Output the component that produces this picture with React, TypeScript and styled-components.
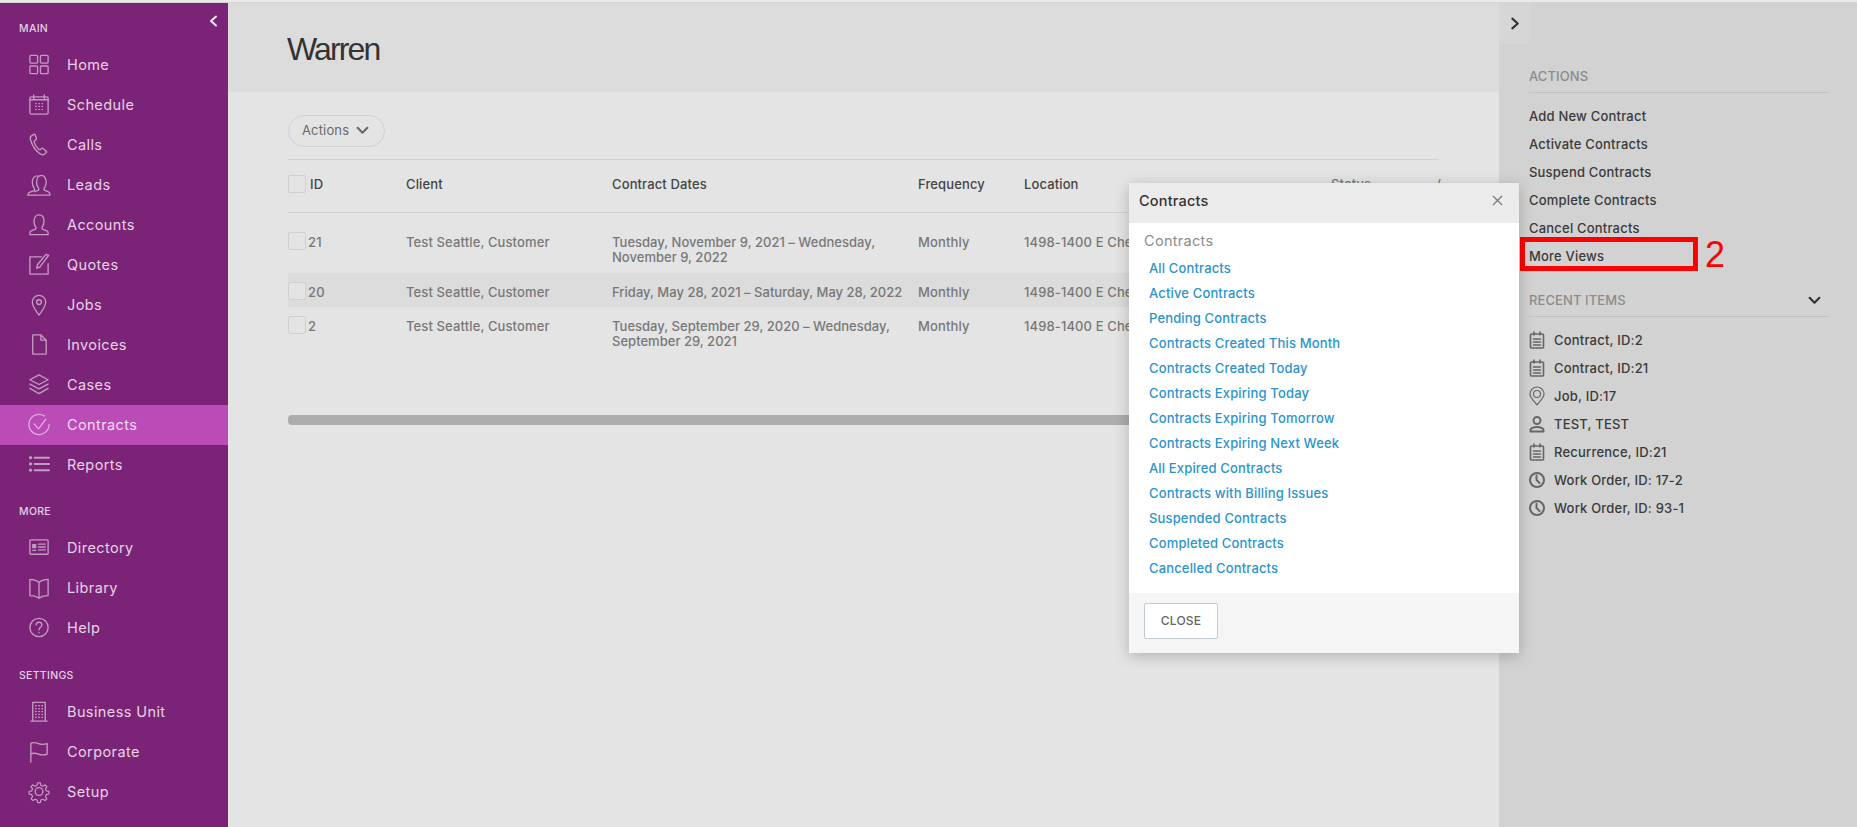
import React from "react";
import styled, { createGlobalStyle } from "styled-components";

const Global = createGlobalStyle`
  html, body { margin: 0; padding: 0; height: 100%; overflow: hidden; background: #e4e4e4; }
  body { font-family: Inter, "Noto Sans", "Liberation Sans", sans-serif; }
  * { box-sizing: border-box; }
`;

const Page = styled.div`
  position: relative;
  width: 1857px;
  height: 827px;
  display: flex;
  flex-direction: column;
  overflow: hidden;
`;
const TopStrip = styled.div`
  height: 3px;
  flex: none;
  background: #e9e9e9;
  border-bottom: 1px solid #d4d4d4;
`;
const Shell = styled.div`
  flex: 1;
  display: flex;
  min-height: 0;
`;

/* Sidebar */
const Sidebar = styled.nav`
  position: relative;
  width: 228px;
  flex: none;
  background: #7b2477;
  padding-top: 19px;
  color: #e6d3e5;
`;
const Collapse = styled.button`
  position: absolute;
  top: 11px;
  right: 8px;
  width: 12px;
  height: 14px;
  padding: 0;
  border: 0;
  background: none;
  color: #f2e8f1;
  display: flex;
`;
const NavLabel = styled.div<{ $top: number }>`
  height: 14px;
  line-height: 14px;
  margin: ${(p) => p.$top}px 0 9px 19px;
  font-size: 10.5px;
  font-weight: 500;
  letter-spacing: 0.3px;
  color: #e3cfe2;
`;
const NavRow = styled.a<{ $active?: boolean }>`
  height: 40px;
  display: flex;
  align-items: center;
  padding: 0 0 1px 27px;
  font-size: 14.5px;
  font-weight: 400;
  letter-spacing: 0.4px;
  color: ${(p) => (p.$active ? "#eeddee" : "#e6d3e5")};
  background: ${(p) => (p.$active ? "#bb4bb6" : "transparent")};
`;
const NavIcon = styled.svg<{ $active?: boolean }>`
  width: 24px;
  height: 24px;
  flex: none;
  margin-right: 16px;
  fill: none;
  stroke: ${(p) => (p.$active ? "#dfa9db" : "#c39bc2")};
  stroke-width: 1.4;
  stroke-linecap: round;
  stroke-linejoin: round;
`;

/* Main */
const Main = styled.main`
  flex: 1;
  min-width: 0;
  display: flex;
  flex-direction: column;
  background: #e4e4e4;
`;
const MainHeader = styled.header`
  height: 89px;
  flex: none;
  background: #dcdcdc;
  padding: 28px 60px 0 59px;
`;
const Title = styled.h1`
  margin: 0;
  font-family: "Liberation Sans", Arial, sans-serif;
  font-size: 32px;
  line-height: 36px;
  font-weight: 400;
  letter-spacing: -1.9px;
  color: #333;
`;
const MainBody = styled.div`
  flex: 1;
  padding: 23px 60px 0;
`;
const ActionsButton = styled.button`
  width: 97px;
  height: 32px;
  display: flex;
  align-items: center;
  padding: 0 0 2px 13px;
  gap: 7px;
  background: transparent;
  border: 1px solid #d0d0d0;
  border-radius: 16px;
  font-family: inherit;
  font-size: 13px;
  letter-spacing: 0.15px;
  color: #6a6a6a;
`;
const Table = styled.div`
  margin-top: 12px;
  border-top: 1px solid #d2d2d2;
`;
const Row = styled.div<{ $shade?: boolean }>`
  display: grid;
  grid-template-columns: 118px 206px 306px 106px 307px 105px 1fr;
  background: ${(p) => (p.$shade ? "#dcdcdc" : "transparent")};
  font-size: 13px;
  font-weight: 500;
  letter-spacing: 0.12px;
  line-height: 15px;
  color: #787878;
`;
const HeadRow = styled(Row)`
  height: 53px;
  align-items: center;
  padding-bottom: 4px;
  border-bottom: 1px solid #d2d2d2;
  margin-bottom: 12px;
  color: #454545;
`;
const BodyRow = styled(Row)<{ $h: number; $pad: number }>`
  height: ${(p) => p.$h}px;
  padding-top: ${(p) => p.$pad}px;
`;
const IdCell = styled.div`
  display: flex;
  gap: 2px;
`;
const HeadId = styled(IdCell)`
  gap: 4px;
  align-items: center;
`;
const Check = styled.span`
  width: 18px;
  height: 18px;
  border: 1px solid #cfcfcf;
  border-radius: 2px;
  background: #e4e4e4;
  flex: none;
  margin-top: -3px;
`;
const HeadCheck = styled(Check)`
  margin-top: 0;
`;
const DateCell = styled.div`
  letter-spacing: 0.02px;
`;
const LocationCell = styled.div`
  white-space: nowrap;
`;
const Scrollbar = styled.div`
  margin-top: 58px;
  height: 10px;
  width: 880px;
  border-radius: 4px;
  background: #adadad;
`;

/* Aside */
const Aside = styled.aside`
  position: relative;
  width: 358px;
  flex: none;
  background: #d2d2d2;
  padding: 65px 28px 0 30px;
`;
const AsideToggle = styled.button`
  position: absolute;
  left: 0;
  top: 0;
  width: 30px;
  height: 41px;
  padding: 0;
  border: 0;
  background: #d6d6d6;
  color: #333;
  display: flex;
  align-items: center;
  justify-content: center;
`;
const SectionHead = styled.div`
  height: 25px;
  display: flex;
  justify-content: space-between;
  align-items: flex-start;
  border-bottom: 1px solid #c2c2c2;
  font-size: 13px;
  line-height: 16px;
  font-weight: 500;
  letter-spacing: 0.1px;
  color: #8b8b8b;
`;
const SectionChevron = styled.span`
  display: flex;
  margin: 2px 8px 0 0;
  color: #333;
`;
const ActionList = styled.div`
  padding-top: 9px;
  margin-bottom: 22px;
`;
const ActionItem = styled.div`
  position: relative;
  height: 28px;
  line-height: 28px;
  font-size: 13px;
  font-weight: 500;
  letter-spacing: 0.2px;
  color: #3a3a3a;
  white-space: nowrap;
`;
const RedBox = styled.div`
  position: absolute;
  left: -9px;
  top: -5px;
  width: 178px;
  height: 34px;
  border: 5px solid #ff0000;
`;
const RedNumber = styled.div`
  position: absolute;
  left: 176px;
  top: -5px;
  font-family: "Liberation Sans", Arial, sans-serif;
  font-size: 36px;
  line-height: 36px;
  font-weight: 400;
  color: #ff0000;
`;
const RecentList = styled.div`
  padding-top: 9px;
`;
const RecentItem = styled(ActionItem)`
  display: flex;
  align-items: center;
  gap: 9px;
`;
const RecentIcon = styled.svg`
  width: 16px;
  height: 20px;
  flex: none;
  fill: none;
  stroke: #666;
  stroke-width: 1.6;
  stroke-linecap: round;
  stroke-linejoin: round;
`;

/* Modal */
const Modal = styled.div`
  position: absolute;
  left: 1129px;
  top: 183px;
  width: 390px;
  height: 470px;
  display: flex;
  flex-direction: column;
  background: #fff;
  box-shadow: 0 3px 14px rgba(0, 0, 0, 0.22);
`;
const ModalHead = styled.div`
  height: 40px;
  flex: none;
  display: flex;
  align-items: center;
  justify-content: space-between;
  padding: 0 16px 5px 10px;
  background: #ebebeb;
  font-size: 14.5px;
  font-weight: 500;
  letter-spacing: 0.2px;
  color: #333;
`;
const ModalBody = styled.div`
  flex: 1;
  padding: 9px 15px 0;
`;
const ModalSection = styled.div`
  height: 18px;
  line-height: 18px;
  font-size: 14.5px;
  letter-spacing: 0.3px;
  color: #8c8c8c;
  margin-bottom: 6px;
`;
const ModalLink = styled.a`
  display: block;
  height: 25px;
  line-height: 25px;
  padding-left: 5px;
  font-size: 13px;
  font-weight: 500;
  letter-spacing: 0.15px;
  color: #2a94cc;
`;
const ModalFoot = styled.div`
  height: 60px;
  flex: none;
  background: #f5f5f5;
  padding: 10px 15px;
`;
const CloseButton = styled.button`
  width: 74px;
  height: 36px;
  padding: 0 0 1px;
  background: #fff;
  border: 1px solid #c3cbd2;
  border-radius: 2px;
  font-family: inherit;
  font-size: 12px;
  font-weight: 500;
  letter-spacing: 0.2px;
  color: #666;
`;
const StatusTip = styled.span`
  color: #777;
`;

const icons: Record<string, React.ReactNode> = {
  Home: (
    <>
      <rect x="3" y="2.5" width="8" height="8" rx="1" />
      <rect x="14" y="2.5" width="8" height="8" rx="1" />
      <rect x="3" y="13.5" width="8" height="8" rx="1" />
      <rect x="14" y="13.5" width="8" height="8" rx="1" />
    </>
  ),
  Schedule: (
    <>
      <rect x="3" y="4" width="19" height="18" rx="1.5" />
      <path d="M7 2v4M18 2v4M3 7h19" />
      <path d="M9 11h.5M12.3 11h.5M15.6 11h.5M9 14h.5M12.3 14h.5M15.6 14h.5M9 17h.5M12.3 17h.5M15.6 17h.5" />
    </>
  ),
  Calls: (
    <path d="M7 1.5 4.6 3c-1.2.8-1.4 2.6-.9 4.3 1.6 5.3 4.7 10.5 9.3 14 1.6 1.2 3.6 1.8 5 .8l2-1.5c.6-.5.5-1.2 0-1.7l-3.3-2.8c-.5-.4-1.1-.4-1.6 0l-1.3 1c-.5.4-1.1.3-1.6-.1-2.4-2-4-4.8-4.8-7.7-.2-.6 0-1.1.5-1.4l1.4-.9c.5-.3.7-.9.5-1.5L8.600 2c-.3-.6-1-.9-1.6-.5z" />
  ),
  Leads: (
    <>
      <path d="M1 23c0-1.500.5-2.500 2-3l4-1.500c1-.5 1-1.500.5-2.500C6 14 5.500 12 5.500 9.500 5.500 5.500 8 3 11 3" />
      <path d="M9 23h15c0-2-.7-3-2-3.500l-3.500-1.300c-1-.5-1-1.700-.5-2.500 1.200-1.700 2-3.700 2-6C20 5.500 18 2.500 15 2.500S10 5.500 10 9.700c0 2.300.7 4.300 2 6 .5.800.5 2-.5 2.500L8 19.500" />
      <path d="M1 23h8" />
    </>
  ),
  Accounts: (
    <path d="M3 22.500v-1.800c0-1.200.6-2 1.800-2.400l3.600-1.300c1.100-.5 1.300-1.500.6-2.600C8 13 7.300 11 7.300 8.500c0-4 2-6.500 5.200-6.500s5.200 2.500 5.200 6.500c0 2.500-.7 4.500-1.700 5.900-.7 1.100-.5 2.100.6 2.600l3.600 1.300c1.200.4 1.800 1.200 1.800 2.400v1.800z" />
  ),
  Quotes: (
    <>
      <path d="M15 4H3v18h19V11" />
      <path d="M22.500 2.500 19.800 1.500 11 12l-1 4 3.500-1.500z" />
    </>
  ),
  Jobs: (
    <>
      <path d="M12.500 23c-3-4-7-8.500-7-13.500a7 7 0 0 1 14 0c0 5-4 9.500-7 13.500z" />
      <circle cx="12.500" cy="9.500" r="2.500" />
    </>
  ),
  Invoices: <path d="M6 2h8.500L20 7.500V22H6zM14.500 2v5.500H20" />,
  Cases: (
    <>
      <path d="M12.500 2 22 7l-9.500 5L3 7z" />
      <path d="M3 11.500l9.500 5 9.500-5" />
      <path d="M3 16l9.500 5.500L22 16" />
    </>
  ),
  Contracts: (
    <>
      <path d="M23 12a10.500 10.500 0 1 1-5-9" />
      <path d="M7.500 11.500l4.500 5 7.500-10" />
    </>
  ),
  Reports: (
    <>
      <path d="M8 5h15M8 11.500h15M8 18h15" strokeWidth="2" />
      <path d="M3.500 5h.5M3.500 11.500h.5M3.500 18h.5" strokeWidth="3" />
    </>
  ),
  Directory: (
    <>
      <rect x="3" y="4" width="19" height="15" rx="1" />
      <path d="M6 9h3v3H6z" fill="#c39bc2" />
      <path d="M12 8.500h7M12 11.500h7M12 14.500h7M6 15h3" />
    </>
  ),
  Library: (
    <path d="M12.500 6.500C10 4.500 7 3.500 3 3.500v17c4 0 7 1 9.500 2.500 2.500-1.500 5.500-2.500 9.500-2.500v-17c-4 0-7 1-9.500 3zM12.500 6.500V23" />
  ),
  Help: (
    <>
      <circle cx="12.500" cy="12" r="9.500" />
      <path d="M9.500 9.500c0-2 1.300-3 3-3s3 1.100 3 2.800c0 2.500-3 2.500-3 5" />
      <path d="M12.500 17.200v.3" />
    </>
  ),
  "Business Unit": (
    <>
      <path d="M6 21.500V2.500h13v19M4 22h17" />
      <path d="M9 6h.5M12.300 6h.5M15.600 6h.5M9 9h.5M12.300 9h.5M15.600 9h.5M9 12h.5M12.300 12h.5M15.600 12h.5M9 15h.5M12.300 15h.5M15.600 15h.5M9 18h.5M12.300 18h.5M15.600 18h.5" />
    </>
  ),
  Corporate: (
    <path d="M4 23V3.500c3-1.500 5-1 8 .2 3 1.200 5.500 1.200 9 0v11c-3.500 1.200-6 1.200-9 0-3-1.200-5-1.500-8-.2" />
  ),
  Setup: (
    <>
      <circle cx="12.500" cy="12" r="4" />
      <path d="M11 2h3l.7 3 2.200.9 2.600-1.600 2.100 2.100-1.600 2.600.9 2.200 3 .7v3l-3 .7-.9 2.200 1.600 2.600-2.100 2.100-2.600-1.600-2.200.9-.7 3h-3l-.7-3-2.200-.9-2.600 1.600-2.100-2.100 1.600-2.600-.9-2.200-3-.7v-3l3-.7.9-2.200L3.200 6.400l2.100-2.100 2.600 1.600 2.200-.9z" transform="translate(1.250 1.200) scale(.9)" />
    </>
  ),
};

const mainNav = ["Home", "Schedule", "Calls", "Leads", "Accounts", "Quotes", "Jobs", "Invoices", "Cases", "Contracts", "Reports"];
const moreNav = ["Directory", "Library", "Help"];
const settingsNav = ["Business Unit", "Corporate", "Setup"];

const rows = [
  { id: "21", date: "Tuesday, November 9, 2021 – Wednesday, November 9, 2022", h: 48, pad: 10 },
  { id: "20", date: "Friday, May 28, 2021 – Saturday, May 28, 2022", h: 34, pad: 12, shade: true },
  { id: "2", date: "Tuesday, September 29, 2020 – Wednesday, September 29, 2021", h: 50, pad: 12 },
];

const actions = ["Add New Contract", "Activate Contracts", "Suspend Contracts", "Complete Contracts", "Cancel Contracts"];

const links = [
  "All Contracts",
  "Active Contracts",
  "Pending Contracts",
  "Contracts Created This Month",
  "Contracts Created Today",
  "Contracts Expiring Today",
  "Contracts Expiring Tomorrow",
  "Contracts Expiring Next Week",
  "All Expired Contracts",
  "Contracts with Billing Issues",
  "Suspended Contracts",
  "Completed Contracts",
  "Cancelled Contracts",
];

const recentIcons: Record<string, React.ReactNode> = {
  clip: (
    <>
      <rect x="1.500" y="4" width="13" height="14" rx="1" />
      <path d="M5 2v3M11 2v3M4.500 9h7M4.500 12h7M4.500 15h7" />
    </>
  ),
  pin: (
    <>
      <path d="M8 19C5.500 15.500 1 12 1 8a7 7 0 0 1 14 0c0 4-4.500 7.500-7 11z" strokeWidth="1.200" />
      <circle cx="8" cy="8" r="3.500" strokeWidth="1.200" />
    </>
  ),
  user: (
    <>
      <circle cx="8" cy="6.500" r="3.500" strokeWidth="2" />
      <path d="M1.500 17.500v-1.500c0-1.500 3-3 6.500-3s6.500 1.500 6.500 3v1.500z" strokeWidth="2" />
    </>
  ),
  clock: (
    <>
      <circle cx="8" cy="10" r="7" strokeWidth="2" />
      <path d="M7.500 5.500V10l3 3" strokeWidth="2" />
    </>
  ),
};

const recents = [
  ["clip", "Contract, ID:2"],
  ["clip", "Contract, ID:21"],
  ["pin", "Job, ID:17"],
  ["user", "TEST, TEST"],
  ["clip", "Recurrence, ID:21"],
  ["clock", "Work Order, ID: 17-2"],
  ["clock", "Work Order, ID: 93-1"],
];

function Chevron({ dir, size = 12, w = 2 }: { dir: "left" | "right" | "down"; size?: number; w?: number }) {
  const d = dir === "left" ? "M8 1.500 3 6l5 4.500" : dir === "right" ? "M4 1.500 9 6l-5 4.500" : "M1.500 3.500 6 8l4.500-4.500";
  return (
    <svg width={size} height={size} viewBox="0 0 12 12" fill="none" stroke="currentColor" strokeWidth={w} strokeLinecap="round" strokeLinejoin="round">
      <path d={d} />
    </svg>
  );
}

function NavItems({ items }: { items: string[] }) {
  return (
    <>
      {items.map((n) => (
        <NavRow key={n} $active={n === "Contracts"}>
          <NavIcon viewBox="0 0 25 25" $active={n === "Contracts"}>
            {icons[n]}
          </NavIcon>
          {n}
        </NavRow>
      ))}
    </>
  );
}

export default function App() {
  return (
    <Page>
      <Global />
      <TopStrip />
      <Shell>
        <Sidebar>
          <Collapse>
            <Chevron dir="left" size={14} />
          </Collapse>
          <NavLabel $top={0}>MAIN</NavLabel>
          <NavItems items={mainNav} />
          <NavLabel $top={20}>MORE</NavLabel>
          <NavItems items={moreNav} />
          <NavLabel $top={21}>SETTINGS</NavLabel>
          <NavItems items={settingsNav} />
        </Sidebar>
        <Main>
          <MainHeader>
            <Title>Warren</Title>
          </MainHeader>
          <MainBody>
            <ActionsButton>
              Actions
              <Chevron dir="down" size={13} />
            </ActionsButton>
            <Table>
              <HeadRow>
                <HeadId>
                  <HeadCheck />
                  ID
                </HeadId>
                <div>Client</div>
                <div>Contract Dates</div>
                <div>Frequency</div>
                <div>Location</div>
                <StatusTip>Status</StatusTip>
                <StatusTip>/</StatusTip>
              </HeadRow>
              {rows.map((r) => (
                <BodyRow key={r.id} $h={r.h} $pad={r.pad} $shade={r.shade}>
                  <IdCell>
                    <Check />
                    {r.id}
                  </IdCell>
                  <div>Test Seattle, Customer</div>
                  <DateCell>{r.date}</DateCell>
                  <div>Monthly</div>
                  <LocationCell>1498-1400 E Che</LocationCell>
                </BodyRow>
              ))}
            </Table>
            <Scrollbar />
          </MainBody>
        </Main>
        <Aside>
          <AsideToggle>
            <Chevron dir="right" size={13} />
          </AsideToggle>
          <SectionHead>ACTIONS</SectionHead>
          <ActionList>
            {actions.map((a) => (
              <ActionItem key={a}>{a}</ActionItem>
            ))}
            <ActionItem>
              More Views
              <RedBox />
              <RedNumber>2</RedNumber>
            </ActionItem>
          </ActionList>
          <SectionHead>
            RECENT ITEMS
            <SectionChevron>
              <Chevron dir="down" size={13} />
            </SectionChevron>
          </SectionHead>
          <RecentList>
            {recents.map(([icon, label]) => (
              <RecentItem key={label}>
                <RecentIcon viewBox="0 0 16 20">{recentIcons[icon]}</RecentIcon>
                {label}
              </RecentItem>
            ))}
          </RecentList>
        </Aside>
      </Shell>
      <Modal>
        <ModalHead>
          Contracts
          <svg width="11" height="11" viewBox="0 0 11 11" stroke="#777" strokeWidth="1.200" fill="none">
            <path d="M1 1l9 9M10 1l-9 9" />
          </svg>
        </ModalHead>
        <ModalBody>
          <ModalSection>Contracts</ModalSection>
          {links.map((l) => (
            <ModalLink key={l}>{l}</ModalLink>
          ))}
        </ModalBody>
        <ModalFoot>
          <CloseButton>CLOSE</CloseButton>
        </ModalFoot>
      </Modal>
    </Page>
  );
}
